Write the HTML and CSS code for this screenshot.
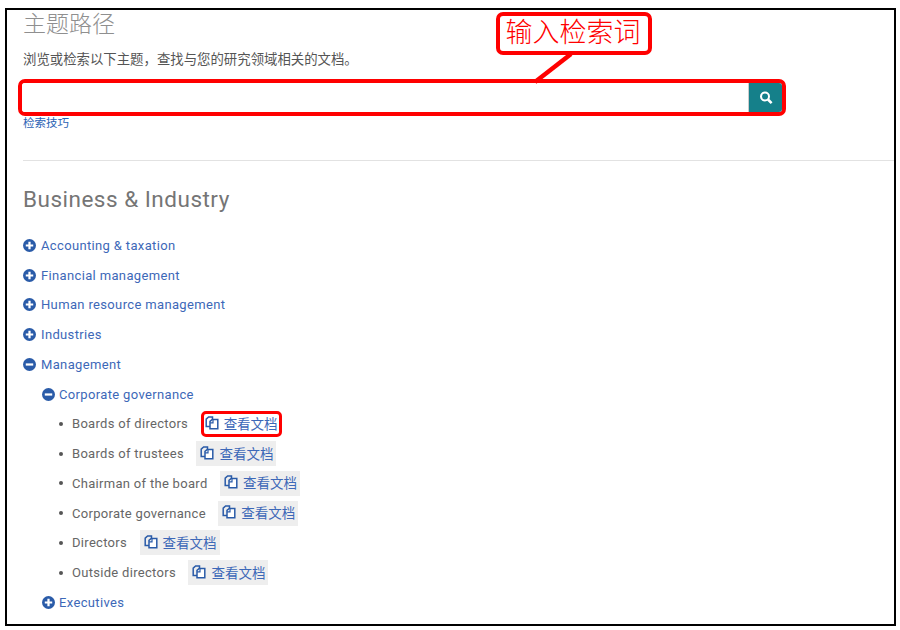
FILE: index.html
```html
<!DOCTYPE html>
<html lang="zh">
<head>
<meta charset="utf-8">
<title>主题路径</title>
<link rel="stylesheet" href="styles.css">
</head>
<body>
<svg class="defs" width="0" height="0" aria-hidden="true">
  <symbol id="plus" viewBox="0 0 14 14"><circle cx="7" cy="7" r="7" fill="#2a5ba8"/><path d="M7 3v8M3 7h8" stroke="#fff" stroke-width="2.4"/></symbol>
  <symbol id="minus" viewBox="0 0 14 14"><circle cx="7" cy="7" r="7" fill="#2a5ba8"/><path d="M3 7h8" stroke="#fff" stroke-width="2.4"/></symbol>
  <symbol id="docs" viewBox="0 0 14 14"><path d="M5 10.5H1.2V3.2L3.6 1H7.5v2.5" fill="none" stroke="#2a5ba8" stroke-width="1.5"/><path d="M5 12.8V5.4L7.2 3.4h5.6v9.4z" fill="#fff" stroke="#2a5ba8" stroke-width="1.5"/><path d="M8 3.6v3.2H5.2" fill="none" stroke="#2a5ba8" stroke-width="1.2"/></symbol>
</svg>
<main class="frame">
  <h1 class="title">主题路径</h1>
  <p class="intro">浏览或检索以下主题，查找与您的研究领域相关的文档。</p>
  <form class="search">
    <div class="search-input"></div>
    <div class="search-btn">
      <svg width="16" height="16" viewBox="0 0 16 16"><circle cx="7" cy="6.5" r="4" fill="none" stroke="#fff" stroke-width="2"/><path d="M10 9.5l3.6 3.6" stroke="#fff" stroke-width="2.6"/></svg>
    </div>
  </form>
  <a class="tips">检索技巧</a>
  <hr class="rule">
  <h2 class="section">Business &amp; Industry</h2>
  <ul class="tree">
    <li class="node"><svg class="toggle"><use href="#plus"/></svg><a>Accounting &amp; taxation</a></li>
    <li class="node"><svg class="toggle"><use href="#plus"/></svg><a>Financial management</a></li>
    <li class="node"><svg class="toggle"><use href="#plus"/></svg><a>Human resource management</a></li>
    <li class="node"><svg class="toggle"><use href="#plus"/></svg><a>Industries</a></li>
    <li class="node"><svg class="toggle"><use href="#minus"/></svg><a>Management</a></li>
    <li class="node sub"><svg class="toggle"><use href="#minus"/></svg><a>Corporate governance</a></li>
    <li class="leaf"><i class="dot"></i><span class="leaf-name">Boards of directors</span><a class="chip marked"><svg class="doc"><use href="#docs"/></svg>查看文档</a></li>
    <li class="leaf"><i class="dot"></i><span class="leaf-name">Boards of trustees</span><a class="chip"><svg class="doc"><use href="#docs"/></svg>查看文档</a></li>
    <li class="leaf"><i class="dot"></i><span class="leaf-name">Chairman of the board</span><a class="chip"><svg class="doc"><use href="#docs"/></svg>查看文档</a></li>
    <li class="leaf"><i class="dot"></i><span class="leaf-name">Corporate governance</span><a class="chip"><svg class="doc"><use href="#docs"/></svg>查看文档</a></li>
    <li class="leaf"><i class="dot"></i><span class="leaf-name">Directors</span><a class="chip"><svg class="doc"><use href="#docs"/></svg>查看文档</a></li>
    <li class="leaf"><i class="dot"></i><span class="leaf-name">Outside directors</span><a class="chip"><svg class="doc"><use href="#docs"/></svg>查看文档</a></li>
    <li class="node sub"><svg class="toggle"><use href="#plus"/></svg><a>Executives</a></li>
  </ul>
  <div class="callout">输入检索词</div>
  <svg class="pointer" width="50" height="40" viewBox="0 0 50 40"><path d="M38 2L2 30" stroke="#f00" stroke-width="4.5" fill="none"/></svg>
</main>
</body>
</html>
```
FILE: styles.css
```css
* { box-sizing: border-box; }
html, body { margin: 0; padding: 0; background: #fff; }
body { width: 900px; height: 630px; overflow: hidden; font-family: Roboto, "Noto Sans CJK SC", sans-serif; }
.defs { position: absolute; }
.frame {
  position: relative;
  width: 891px;
  height: 618px;
  margin: 8px 0 0 5px;
  padding: 0 0 0 16px;
  border: 2px solid #000;
  overflow: hidden;
}
.title { margin: 1px 0 0; font-size: 23px; line-height: 28px; font-weight: 300; color: #8f8f8f; }
.intro { margin: 12px 0 0; font-size: 13.4px; line-height: 18px; color: #555; }
.search {
  display: flex;
  width: 768px;
  height: 37px;
  margin: 10px 0 0 -5px;
  border: 4px solid #f00;
  border-radius: 7px;
  overflow: hidden;
}
.search-input { flex: 1; background: #fff; border-right: 1px solid #ccc; }
.search-btn { width: 33px; background: #15808a; display: flex; align-items: center; justify-content: center; }
.tips { display: block; margin-top: 1px; font-size: 11.5px; line-height: 13px; color: #2a62b4; }
.rule { margin: 30px 0 0; border: 0; border-top: 1px solid #e2e2e2; }
.section { margin: 23px 0 0; font-size: 22.5px; line-height: 30px; font-weight: 400; letter-spacing: 0.5px; color: #757575; }
.tree { list-style: none; margin: 16.5px 0 0; padding: 0; font-size: 13px; }
.node, .leaf { display: flex; align-items: center; height: 29.75px; }
.node { letter-spacing: 0.35px; }
.leaf { letter-spacing: 0.3px; padding-left: 36px; }
.node a { color: #3d68b8; }
.toggle { width: 13px; height: 13px; margin-right: 5px; flex: none; }
.sub { padding-left: 19px; }
.sub .toggle { margin-right: 4px; }
.dot { width: 4px; height: 4px; border-radius: 50%; background: #555; margin-right: 9px; flex: none; }
.leaf-name { color: #666; margin-right: 12.5px; }
.chip {
  display: inline-flex;
  align-items: center;
  height: 25px;
  padding: 0 3px 2px 4px;
  background: #eee;
  color: #3d68b8;
  font-size: 13.5px;
  letter-spacing: 0;
}
.doc { width: 14px; height: 14px; margin-right: 5px; flex: none; }
.marked { background: #fff; outline: 3px solid #f00; outline-offset: -3px; border-radius: 5px; height: 26px; padding: 0 4px 2px; }
.callout {
  position: absolute;
  left: 489px;
  top: 2px;
  width: 156px;
  height: 43px;
  padding-right: 2px;
  border: 4px solid #f00;
  border-radius: 7px;
  background: #fff;
  color: #f00;
  font-size: 27px;
  line-height: 35px;
  text-align: center;
  font-weight: 300;
}
.pointer { position: absolute; left: 526px; top: 42px; }
```
